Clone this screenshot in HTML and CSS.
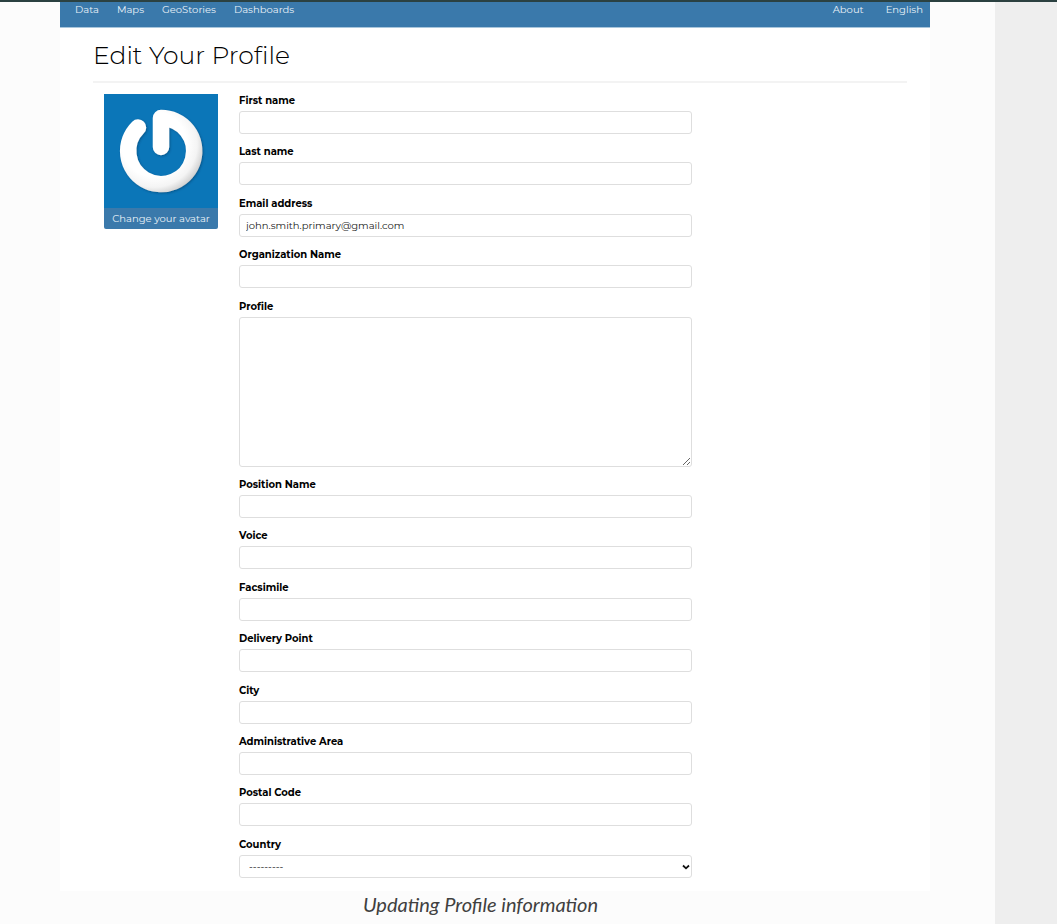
FILE: index.html
```html
<!DOCTYPE html>
<html lang="en">
<head>
<meta charset="utf-8">
<title>Edit Your Profile</title>
<link rel="stylesheet" href="styles.css">
</head>
<body>
<main class="page">
  <figure class="figure">
    <div class="frame">
      <nav class="nav">
        <a href="#">Data</a>
        <a href="#">Maps</a>
        <a href="#">GeoStories</a>
        <a href="#">Dashboards</a>
        <a class="nav-about" href="#">About</a>
        <a class="nav-lang" href="#">English</a>
      </nav>
      <div class="content">
        <h1 class="title">Edit Your Profile</h1>
        <div class="columns">
          <div class="avatar">
            <svg class="avatar-image" viewBox="0 0 114 114" role="img" aria-label="Avatar">
              <defs>
                <radialGradient id="tube" gradientUnits="userSpaceOnUse" cx="50" cy="50" r="54">
                  <stop offset="0.6" stop-color="#fff"/>
                  <stop offset="0.8" stop-color="#f4f4f4"/>
                  <stop offset="1" stop-color="#c4c4c4"/>
                </radialGradient>
                <filter id="shade" x="-20%" y="-20%" width="140%" height="140%">
                  <feDropShadow dx="1" dy="1" stdDeviation="1" flood-color="#04395f" flood-opacity="0.5"/>
                </filter>
              </defs>
              <rect width="114" height="114" fill="#0b76b8"/>
              <path d="M34 33.500A33 33 0 1 0 57 24V53" fill="none" stroke="url(#tube)" stroke-width="16.500" stroke-linecap="round" stroke-linejoin="round" filter="url(#shade)"/>
            </svg>
            <a class="avatar-link" href="#">Change your avatar</a>
          </div>
          <form class="form">
            <div class="field"><label for="first">First name</label><input id="first" type="text"></div>
            <div class="field"><label for="last">Last name</label><input id="last" type="text"></div>
            <div class="field"><label for="email">Email address</label><input id="email" type="email" value="john.smith.primary@gmail.com"></div>
            <div class="field"><label for="org">Organization Name</label><input id="org" type="text"></div>
            <div class="field"><label for="profile">Profile</label><textarea id="profile"></textarea></div>
            <div class="field"><label for="position">Position Name</label><input id="position" type="text"></div>
            <div class="field"><label for="voice">Voice</label><input id="voice" type="text"></div>
            <div class="field"><label for="fax">Facsimile</label><input id="fax" type="text"></div>
            <div class="field"><label for="delivery">Delivery Point</label><input id="delivery" type="text"></div>
            <div class="field"><label for="city">City</label><input id="city" type="text"></div>
            <div class="field"><label for="area">Administrative Area</label><input id="area" type="text"></div>
            <div class="field"><label for="postal">Postal Code</label><input id="postal" type="text"></div>
            <div class="field"><label for="country">Country</label>
              <div class="select-box">
                <select id="country"><option>---------</option></select>
                <svg class="select-arrow" viewBox="0 0 8 6" aria-hidden="true"><path d="M1 1.500L4 4.300L7 1.500" fill="none" stroke="#111" stroke-width="1.800"/></svg>
              </div>
            </div>
          </form>
        </div>
      </div>
    </div>
    <figcaption class="caption">Updating Profile information</figcaption>
  </figure>
</main>
</body>
</html>
```
FILE: styles.css
```css
* {
  box-sizing: border-box;
}

body {
  margin: 0;
  background: #eee;
  color: #000;
  font-family: Montserrat, Inter, "Open Sans", sans-serif;
  font-size: 10px;
}

.page {
  display: flex;
  min-height: 100vh;
  padding-right: 62px;
  border-top: 2px solid #2b4141;
}

.figure {
  display: flex;
  flex: 1;
  flex-direction: column;
  margin: 0;
  padding: 0 65px 0 60px;
  background: #fcfcfc;
}

.frame {
  display: flex;
  flex: 1;
  flex-direction: column;
  background: #fff;
}

.nav {
  display: flex;
  gap: 18px;
  height: 26px;
  padding: 0 7px 0 15px;
  border-bottom: 1px solid #a9c6dc;
  background: #3a79ab;
  line-height: 16px;
}

.nav a,
.avatar-link {
  color: #e8f1f8;
  text-decoration: none;
}

.nav .nav-about {
  margin-left: auto;
}

.nav .nav-lang {
  margin-left: 4px;
}

.content {
  display: flex;
  flex: 1;
  flex-direction: column;
  padding: 10px 23px 13px 33px;
}

.title {
  margin: 0;
  padding-bottom: 9px;
  border-bottom: 2px solid #f3f3f3;
  font-size: 25px;
  font-weight: 300;
  line-height: 34px;
}

.columns {
  display: flex;
  flex: 1;
  gap: 21px;
  padding: 9px 0 0 11px;
}

.avatar {
  display: flex;
  flex: 0 0 114px;
  flex-direction: column;
  padding-top: 2px;
}

.avatar-image {
  display: block;
  width: 100%;
}

.avatar-link {
  border-radius: 0 0 2px 2px;
  background: #3a79ab;
  line-height: 21px;
  text-align: center;
}

.form {
  display: flex;
  flex: 1;
  flex-direction: column;
  justify-content: space-between;
  margin-right: 215px;
}

.field {
  display: flex;
  flex-direction: column;
  gap: 1px;
}

.field label {
  font-weight: 700;
  line-height: 18px;
}

.field input,
.field textarea,
.field select {
  display: block;
  width: 100%;
  height: 23px;
  margin: 0;
  padding: 0 6px;
  border: 1px solid #dedede;
  border-radius: 3px;
  background: #fff;
  color: #222;
  font: inherit;
}

.field textarea {
  height: 150px;
}

.select-box {
  position: relative;
}

.field select {
  appearance: none;
  padding: 0 16px 0 9px;
  color: #000;
}

.select-arrow {
  position: absolute;
  top: 9px;
  right: 2px;
  width: 8px;
  height: 6px;
  pointer-events: none;
}

.caption {
  padding: 0 29px 6px 0;
  color: #404040;
  font-family: Lato, sans-serif;
  font-size: 20px;
  font-style: italic;
  line-height: 27px;
  text-align: center;
}
```
